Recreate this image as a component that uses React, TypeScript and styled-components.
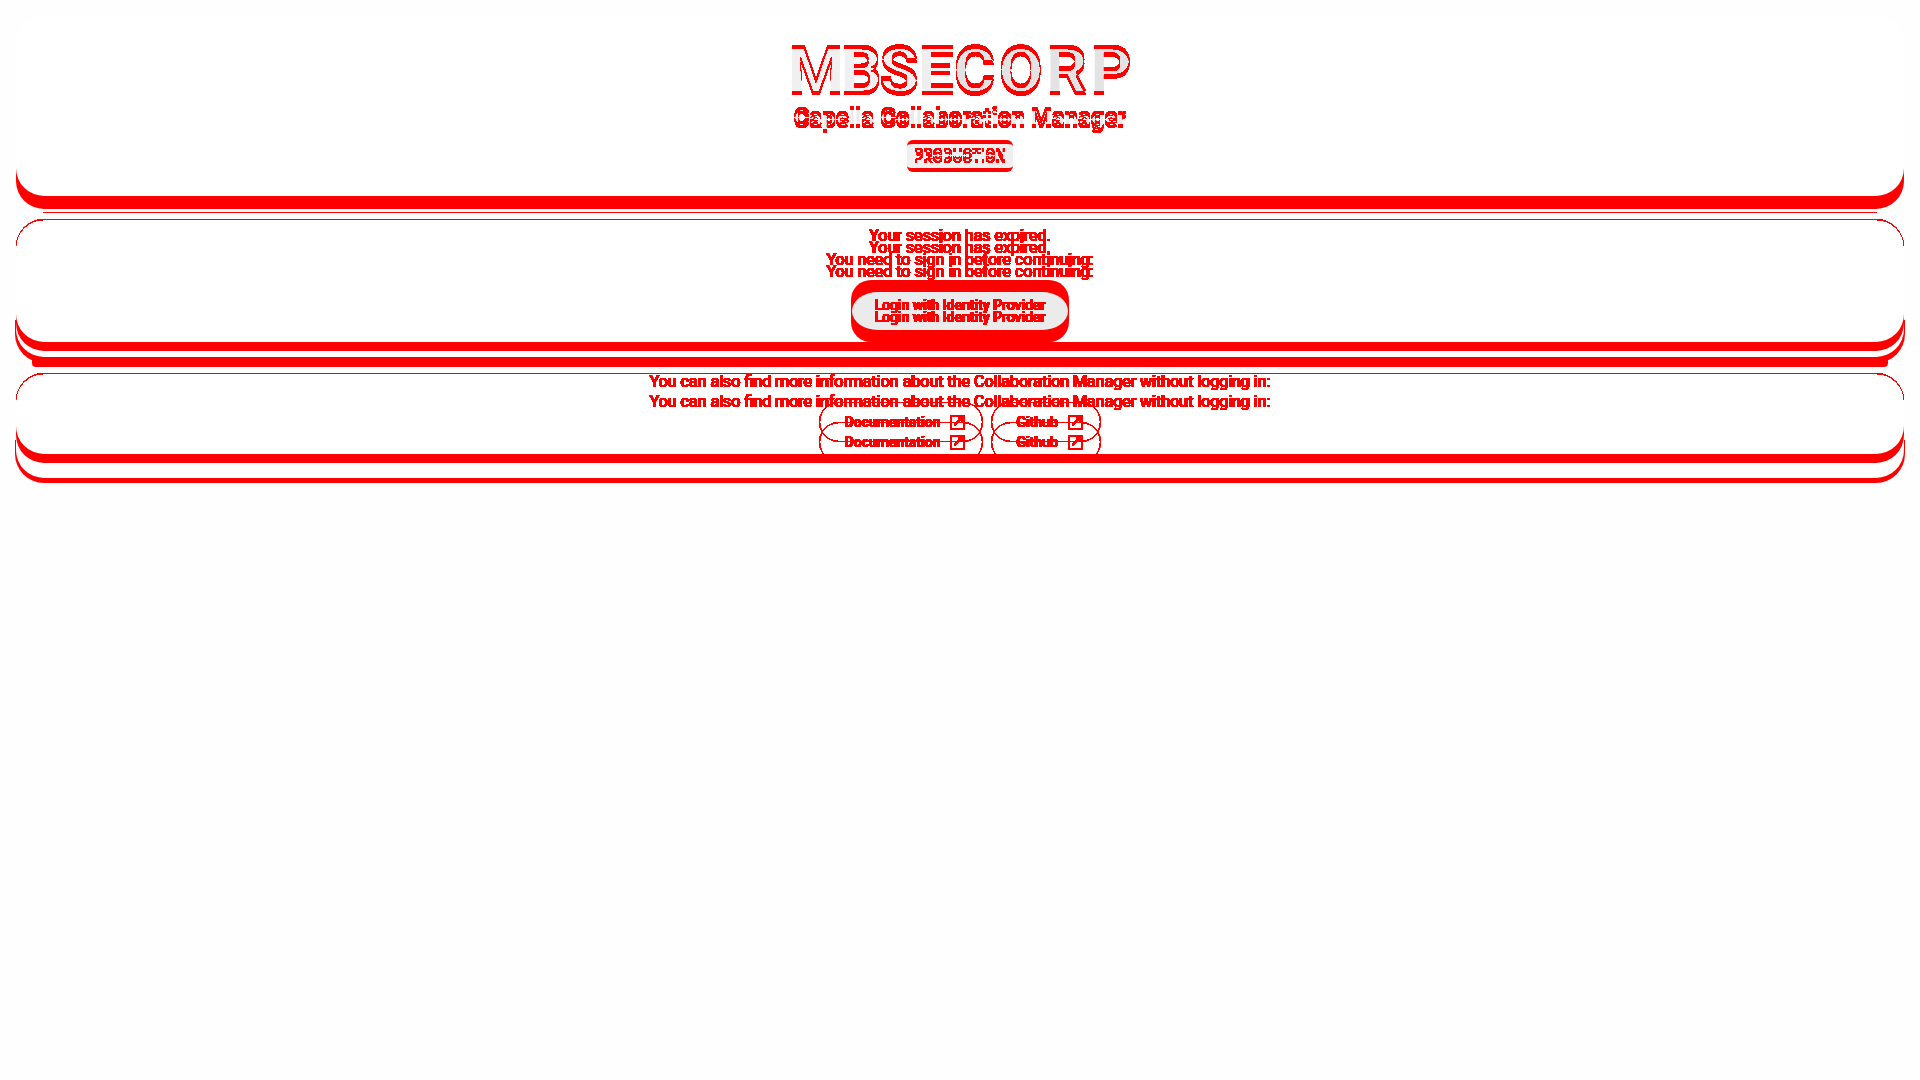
import React from "react";
import styled, { createGlobalStyle } from "styled-components";

const Global = createGlobalStyle`
  *, *::before, *::after { box-sizing: border-box; }
  body { margin: 0; background: #fefefe; }
  #root { height: 1080px; overflow: hidden; }
`;

const RED = "#ff0000";

const Page = styled.main`
  display: flex;
  flex-direction: column;
  height: 1080px;
  padding: 16px 16px 0;
  font-family: Roboto, "Liberation Sans", sans-serif;
  color: ${RED};
`;

const Card = styled.section<{ $height: number; $top?: boolean; $foot: string; $pad: number }>`
  position: relative;
  isolation: isolate;
  flex: none;
  display: flex;
  flex-direction: column;
  align-items: center;
  height: ${(p) => p.$height}px;
  padding-top: ${(p) => p.$pad}px;
  border-radius: 28px;
  background: #fff;

  &::before {
    content: "";
    position: absolute;
    z-index: -1;
    inset: 0 0 auto;
    height: 28px;
    border-top: ${(p) => (p.$top ? 1 : 0)}px solid ${RED};
    border-radius: 28px 28px 0 0;
    filter: url(#crisp);
  }

  &::after {
    content: "";
    position: absolute;
    z-index: -2;
    inset: auto 0 0;
    height: 41px;
    border-radius: 0 0 28px 28px;
    background: #fff;
    box-shadow: ${(p) => p.$foot};
  }
`;

const Rule = styled.div<{ $before: number; $after: number; $inset: number; $thick: number }>`
  flex: none;
  height: ${(p) => p.$thick}px;
  margin: ${(p) => `${p.$before}px ${p.$inset}px ${p.$after}px`};
  border-radius: ${(p) => (p.$thick > 1 ? 4 : 0)}px;
  background: ${RED};
`;

const Logo = styled.div`
  padding-left: 3px;
  font-size: 64px;
  font-weight: 700;
  line-height: 64px;
  white-space: nowrap;
  filter: url(#shift);
`;

const Track = styled.span<{ $space: number; $tone: string }>`
  letter-spacing: ${(p) => p.$space}px;
  color: ${(p) => p.$tone};
`;

const Title = styled.h1`
  margin: -2px 0 0;
  font-size: 24px;
  font-weight: 700;
  line-height: 32px;
  color: #ebebeb;
  white-space: nowrap;
  filter: url(#shift);
`;

const Badge = styled.div`
  display: flex;
  align-items: center;
  justify-content: center;
  width: 106px;
  height: 32px;
  margin-top: 8px;
  border: solid ${RED};
  border-width: 4px 0;
  border-radius: 6px;
  background: #efefef;
`;

const BadgeText = styled.span`
  font-size: 14.5px;
  font-weight: 500;
  line-height: 24px;
  letter-spacing: 0.2px;
  margin-top: -3px;
  color: #efefef;
  filter: url(#shift);
`;

const Line = styled.div<{ $step: number }>`
  height: ${(p) => p.$step}px;
  line-height: ${(p) => p.$step}px;
  font-size: 16px;
  white-space: nowrap;
  text-shadow: 0.5px 0 0 ${RED}, -0.5px 0 0 ${RED};
  filter: url(#crisp);
`;

const LoginRing = styled.button`
  width: 218px;
  height: 62px;
  margin: 2px 0 0;
  padding: 12px 1px;
  border: 0;
  border-radius: 20px;
  background: ${RED};
  font-family: inherit;
`;

const LoginFace = styled.span`
  display: flex;
  flex-direction: column;
  align-items: center;
  height: 38px;
  padding-top: 7px;
  border-radius: 26px / 19px;
  background: #ebebeb;
  color: ${RED};
`;

const LoginText = styled.span`
  height: 12px;
  font-size: 14px;
  font-weight: 500;
  line-height: 12px;
  text-shadow: 0.4px 0 0 ${RED}, -0.4px 0 0 ${RED};
  filter: url(#crisp);
`;

const Links = styled.nav<{ $lift: number }>`
  display: flex;
  gap: 8px;
  flex: none;
  margin-top: ${(p) => p.$lift}px;
  filter: url(#crisp);
`;

const Pill = styled.a<{ $width: number }>`
  display: flex;
  align-items: center;
  justify-content: space-between;
  width: ${(p) => p.$width}px;
  height: 40px;
  padding: 0 16px 0 24.5px;
  border: 1px solid ${RED};
  border-radius: 20px;
  font-size: 14px;
  font-weight: 500;
  line-height: 14px;
  text-shadow: 0.4px 0 0 ${RED}, -0.4px 0 0 ${RED};
`;

const OpenIcon = () => (
  <svg width="17" height="17" viewBox="0 0 17 17" fill="none" stroke={RED} strokeWidth="2">
    <path d="M2 2H15V15H2ZM5.5 11.2L12.5 4.5M9 4H13V8" />
  </svg>
);

const LinkRow = ({ lift }: { lift: number }) => (
  <Links $lift={lift}>
    <Pill $width={164}>Documentation<OpenIcon /></Pill>
    <Pill $width={110}>Github<OpenIcon /></Pill>
  </Links>
);

const Filters = () => (
  <svg width="0" height="0" style={{ position: "absolute" }} aria-hidden="true">
    <filter id="crisp" colorInterpolationFilters="sRGB">
      <feComponentTransfer>
        <feFuncA type="linear" slope="25" intercept="-2" />
      </feComponentTransfer>
    </filter>
    <filter id="shift" colorInterpolationFilters="sRGB" x="-5%" y="-20%" width="110%" height="150%">
      <feOffset in="SourceAlpha" dy="4" result="moved" />
      <feComposite in="SourceAlpha" in2="moved" operator="arithmetic" k2="1" k3="-1" result="above" />
      <feComposite in="moved" in2="SourceAlpha" operator="arithmetic" k2="1" k3="-1" result="below" />
      <feMerge result="edges"><feMergeNode in="above" /><feMergeNode in="below" /></feMerge>
      <feComponentTransfer in="edges" result="hard">
        <feFuncA type="linear" slope="25" intercept="-1" />
      </feComponentTransfer>
      <feFlood floodColor={RED} />
      <feComposite in2="hard" operator="in" result="redEdges" />
      <feComposite in="SourceGraphic" in2="moved" operator="in" result="core" />
      <feMerge><feMergeNode in="core" /><feMergeNode in="redEdges" /></feMerge>
    </filter>
  </svg>
);

const about = "You can also find more information about the Collaboration Manager without logging in:";

export default function App() {
  return (
    <>
      <Global />
      <Filters />
      <Page>
        <Card $height={180} $pad={22} $foot={`0 13px 0 ${RED}`}>
          <Logo>
            <Track $space={-3.3} $tone="#f0f0f0">M</Track>
            <Track $space={-2.4} $tone="#f0f0f0">B</Track>
            <Track $space={-0.5} $tone="#efefef">SE</Track>
            <Track $space={3.3} $tone="#e3e3e3">CORP</Track>
          </Logo>
          <Title>Capella Collaboration Manager</Title>
          <Badge><BadgeText>PRODUCTION</BadgeText></Badge>
        </Card>
        <Rule $before={16} $after={6} $inset={27} $thick={1} />
        <Card $height={123} $pad={11} $top $foot={`0 9px 0 ${RED}, 0 15px 0 #fff, 0 20px 0 1px ${RED}`}>
          <Line $step={12}>Your session has expired.</Line>
          <Line $step={12}>Your session has expired.</Line>
          <Line $step={12}>You need to sign in before continuing:</Line>
          <Line $step={12}>You need to sign in before continuing:</Line>
          <LoginRing>
            <LoginFace>
              <LoginText>Login with Identity Provider</LoginText>
              <LoginText>Login with Identity Provider</LoginText>
            </LoginFace>
          </LoginRing>
        </Card>
        <Rule $before={15} $after={6} $inset={16} $thick={10} />
        <Card $height={81} $pad={0} $top $foot={`0 9px 0 ${RED}, 0 24px 0 #fff, 0 28px 0 1px ${RED}`}>
          <Line $step={20} style={{ marginTop: -1 }}>{about}</Line>
          <Line $step={20}>{about}</Line>
          <LinkRow lift={-10} />
          <LinkRow lift={-20} />
        </Card>
      </Page>
    </>
  );
}
